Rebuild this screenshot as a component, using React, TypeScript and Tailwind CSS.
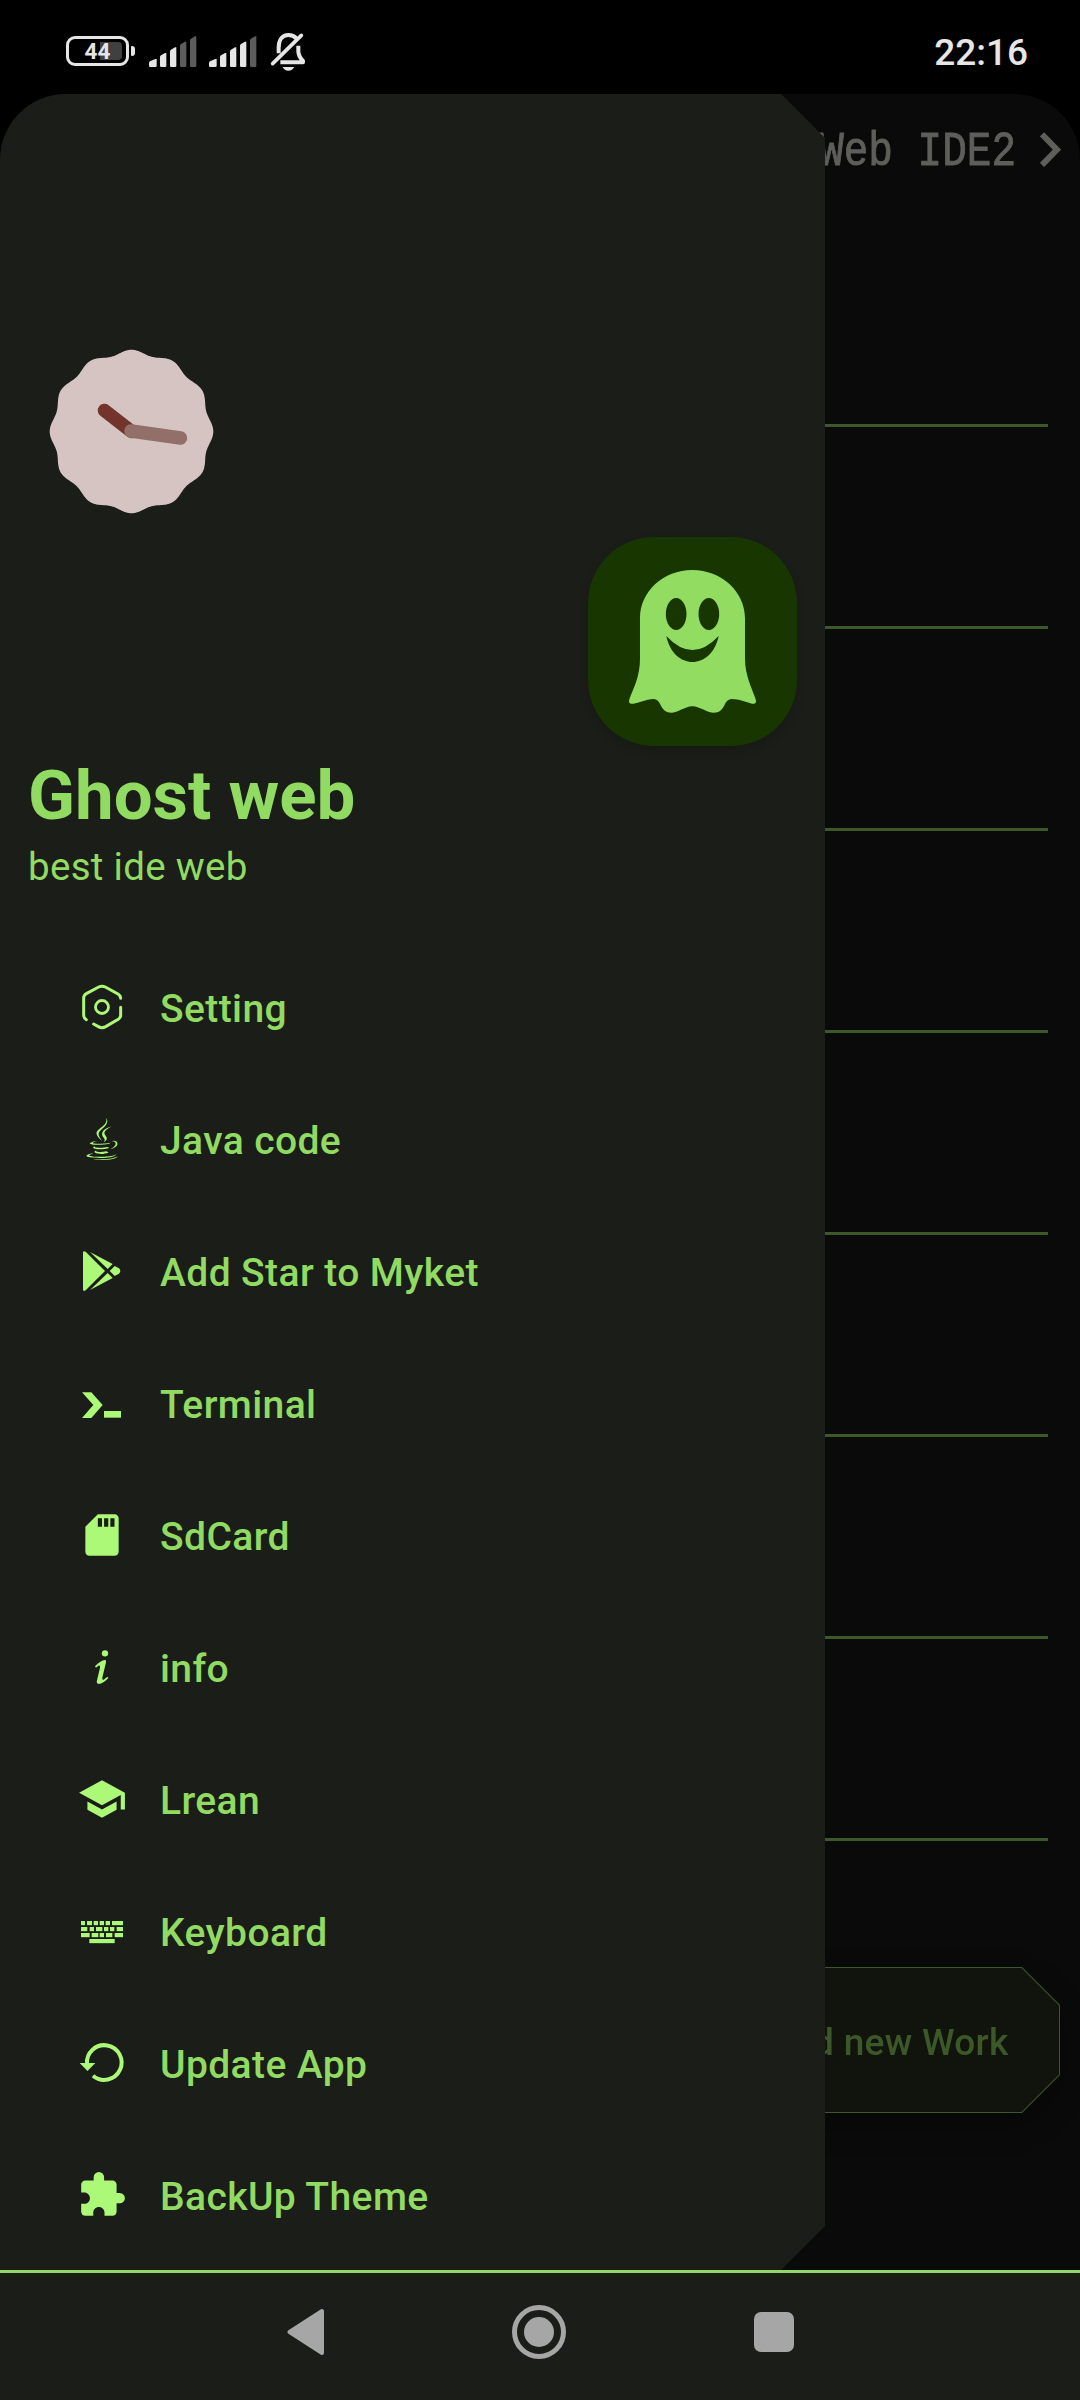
import type { ReactNode } from "react";
import { FaJava } from "react-icons/fa";
import { MdExtension, MdSchool, MdSdCard } from "react-icons/md";

/* Frame for the hand-drawn menu icons: 50px box on a 150-unit grid. */
function Glyph({ children }: { children: ReactNode }) {
  return (
    <svg viewBox="0 0 150 150" className="size-[50px]" fill="currentColor">
      {children}
    </svg>
  );
}

function SettingIcon() {
  return (
    <Glyph>
      <g transform="translate(-51 -66)" fill="none" stroke="currentColor" strokeWidth="9" strokeLinecap="round">
        <path d="M79 179Q71 174 71 165V115Q71 105 79 101L116 81Q126 76 136 81L174 102Q182 107 182 115" />
        <path d="M182 142V166Q182 173 176 177L137 200Q126 206 115 200L101 192" />
        <circle cx="126" cy="141" r="19.500" strokeWidth="8.500" />
      </g>
    </Glyph>
  );
}

function PlayIcon() {
  return (
    <Glyph>
      <g transform="translate(-51 -858)">
        <path d="M69 877Q70 871 77 875L135 933L77 991Q70 995 69 989Z" />
        <path d="M90 876L158 912L143 927Z" />
        <path d="M90 990L158 954L143 939Z" />
        <path d="M149 933L164 918L177 925Q185 933 177 941L164 948Z" />
      </g>
    </Glyph>
  );
}

function TerminalIcon() {
  return (
    <Glyph>
      <g transform="translate(-51 -54)">
        <path d="M66 97H94L128 135L94 174H66L100 135Z" />
        <path d="M132 153H183V173H132Z" />
      </g>
    </Glyph>
  );
}

function InfoIcon() {
  return (
    <Glyph>
      <g transform="translate(-51 -846)">
        <circle cx="135" cy="880" r="9.5" />
        <path d="M105 919C116 907 125 903 133 900Q140 899 138 907L127 953Q126 961 131 959L142 950L145 954C135 965 125 971 116 972Q108 971 111 961L120 923Q121 914 115 917L108 923Z" />
      </g>
    </Glyph>
  );
}

const KEYS = [
  [63, 513, 12], [81, 513, 15], [101, 513, 13], [119, 513, 13], [137, 513, 13], [156, 513, 33],
  [63, 531, 19], [89, 531, 13], [108, 531, 19], [132, 531, 13], [150, 531, 13], [170, 531, 19],
  [63, 549, 26], [95, 549, 20], [119, 549, 13], [138, 549, 19], [164, 549, 25],
  [88, 567, 76],
];

function KeyboardIcon() {
  return (
    <Glyph>
      <g transform="translate(-51 -468)">
        {KEYS.map(([x, y, w]) => (
          <rect key={`${x}-${y}`} x={x} y={y} width={w} height="12.5" />
        ))}
      </g>
    </Glyph>
  );
}

function UpdateIcon() {
  return (
    <Glyph>
      <g transform="translate(-51 -864)">
        <path d="M81 942A52 52 0 1 1 99 977" fill="none" stroke="currentColor" strokeWidth="12" />
        <path d="M59 939H106L82.500 963Z" />
      </g>
    </Glyph>
  );
}

const MENU: { label: string; icon: ReactNode }[] = [
  { label: "Setting", icon: <SettingIcon /> },
  { label: "Java code", icon: <FaJava className="size-[42px]" /> },
  { label: "Add Star to Myket", icon: <PlayIcon /> },
  { label: "Terminal", icon: <TerminalIcon /> },
  { label: "SdCard", icon: <MdSdCard className="size-[50px]" /> },
  { label: "info", icon: <InfoIcon /> },
  { label: "Lrean", icon: <MdSchool className="size-[50px]" /> },
  { label: "Keyboard", icon: <KeyboardIcon /> },
  { label: "Update App", icon: <UpdateIcon /> },
  { label: "BackUp Theme", icon: <MdExtension className="size-[50px]" /> },
];

function Signal({ active }: { active: number }) {
  const tops = [177, 159, 142, 125, 109];
  const lefts = [0, 33, 63, 93, 123];
  return (
    <svg viewBox="0 105 144 99" className="h-[33px] w-[48px]">
      {tops.map((t, i) => {
        const x = lefts[i];
        const w = i === 0 ? 23 : 19;
        return (
          <path
            key={t}
            d={`M${x} ${t + 12}Q${x} ${t + 9} ${x + 3} ${t + 7}L${x + w - 4} ${t}H${x + w}V197Q${x + w} 201 ${x + w - 4} 201H${x + 4}Q${x} 201 ${x} 197Z`}
            fill={i < active ? "#e6e6e6" : "#5c5c5c"}
          />
        );
      })}
    </svg>
  );
}

function StatusBar() {
  return (
    <header className="flex h-[94px] items-start justify-between bg-black pl-[66px] pr-[52px]">
      <div className="flex items-start pt-[32px]">
        <div className="mt-1 flex items-center gap-0.5">
          <div className="relative flex h-[30px] w-[63px] items-center justify-center rounded-[9px] border-3 border-[#e6e6e6]">
            <div className="absolute right-[4px] top-[3px] h-[18px] w-[22px] rounded-r-[4px] bg-[#404040]" />
            <span className="relative pt-px text-[22.5px] leading-none font-bold text-[#e6e6e6]">44</span>
          </div>
          <div className="h-[10px] w-1 rounded-r-[3px] rounded-l-[1px] bg-[#e6e6e6]" />
        </div>
        <div className="ml-[13.5px] mt-[3px] flex gap-3">
          <Signal active={3} />
          <Signal active={4} />
        </div>
        <svg viewBox="807 96 111 120" className="ml-[13px] h-[40px] w-[37px]" fill="none" stroke="#e6e6e6">
          <path d="M833 160V144C833 118 845 105 862 105C872 105 880 108 886 115" strokeWidth="12" />
          <path d="M892 137V154C892 168 897 174 906 183V187H838" strokeWidth="12" strokeLinejoin="round" />
          <path d="M815 191L901 106" strokeWidth="11" strokeLinecap="round" />
          <path d="M845 201H880Q874 212 862 212T845 201Z" fill="#e6e6e6" stroke="none" />
        </svg>
      </div>
      <span className="pt-[30.5px] text-[37px] leading-[44px] font-medium text-[#e6e6e6]">22:16</span>
    </header>
  );
}

/* Twelve-lobed clock face. */
const FACE = Array.from({ length: 360 }, (_, d) => {
  const a = (d * Math.PI) / 180;
  const r = 79.6 + 2.2 * Math.cos(12 * a);
  return `${(82.5 + r * Math.sin(a)).toFixed(2)},${(82.5 - r * Math.cos(a)).toFixed(2)}`;
}).join(" ");

function Clock() {
  return (
    <svg viewBox="0 0 165 165" className="size-[165px]">
      <polygon points={FACE} fill="#d6c4c2" />
      <g strokeWidth="13.5" strokeLinecap="round">
        <path d="M82.500 82.500L55.500 61.500" stroke="#73342b" />
        <path d="M82 82L131.500 89" stroke="#927069" />
      </g>
    </svg>
  );
}

function Ghost() {
  return (
    <div className="size-[209px] rounded-[66px] bg-[#183600] shadow-[0_4px_10px_rgba(0,0,0,0.15)]">
      <svg viewBox="54 51 627 627" className="size-full">
        <path
          fill="#92dd61"
          d="M210 295C210 214 280 150 367 150S525 214 525 295V415C525 468 546 505 557 538C560 549 556 553 546 551C528 547 507 537 485 537C460 540 468 568 442 577C414 584 396 560 367 559C339 560 320 584 293 577C267 566 275 539 250 537C228 538 206 549 190 551C179 553 175 549 178 538C189 507 210 473 210 415Z"
        />
        <g fill="#183600">
          <ellipse cx="318.500" cy="282" rx="31" ry="48" />
          <ellipse cx="416.500" cy="282" rx="31" ry="48" />
          <path d="M289 348Q367 432 446 348C425 452 310 452 289 348Z" />
        </g>
      </svg>
    </div>
  );
}

function Drawer() {
  return (
    <aside className="absolute inset-y-0 left-0 flex w-[825px] flex-col bg-[#1b1d18] text-[#91db62] [clip-path:polygon(0_0,calc(100%_-_44px)_0,100%_44px,100%_calc(100%_-_44px),calc(100%_-_44px)_100%,0_100%)]">
      <div className="flex h-[443px] flex-col pl-[49px] pt-[255px]">
        <Clock />
      </div>
      <div className="flex justify-end pr-7">
        <Ghost />
      </div>
      <div className="flex flex-col gap-[9px] pl-7 pt-[11px]">
        <h1 className="text-[69px] leading-[78px] font-bold">Ghost web</h1>
        <p className="text-[38.5px] leading-[46px] tracking-[0.3px]">best ide web</p>
      </div>
      <nav className="mt-[51px] flex flex-col">
        {MENU.map((m) => (
          <a key={m.label} className="flex h-[132px] items-center gap-[33px] pl-[77px]">
            <span className="flex size-[50px] shrink-0 items-center justify-center text-[#acf877]">{m.icon}</span>
            <span className="pt-[3px] text-[39px] leading-[46px] font-medium tracking-[0.4px]">{m.label}</span>
          </a>
        ))}
      </nav>
    </aside>
  );
}

function Page() {
  return (
    <div className="flex h-full flex-col bg-[#0a0a0a]">
      <div className="flex h-[110px] items-center justify-end gap-[24px] pr-[19px]">
        <span className="mt-[5px] scale-y-115 font-['Liberation_Mono',monospace] text-[41px] leading-[48px] text-[#5e5e5b] [-webkit-text-stroke:0.8px_#5e5e5b]">
          Web IDE2
        </span>
        <svg viewBox="900 394 63 105" className="h-[35px] w-[21px]" fill="none" stroke="#5e5e5b" strokeWidth="18">
          <path d="M906 401L951 447L906 493" />
        </svg>
      </div>
      <div className="flex flex-col gap-[199px] px-8 pt-[220px]">
        {Array.from({ length: 8 }, (_, i) => (
          <div key={i} className="h-[3px] bg-[#3d5828]" />
        ))}
      </div>
      <div className="flex justify-end pr-5 pt-[126px]">
        <div className="drop-shadow-[0_12px_14px_rgba(0,0,0,0.3)]">
          <button className="block h-[146px] bg-[#3d5828] p-px [clip-path:polygon(38px_0,calc(100%_-_38px)_0,100%_38px,100%_calc(100%_-_38px),calc(100%_-_38px)_100%,38px_100%,0_calc(100%_-_38px),0_38px)]">
            <span className="flex h-full items-center bg-[#10140c] px-[50.5px] pt-1.5 text-[37px] font-medium tracking-[0.3px] text-[#3d5828] [clip-path:polygon(37.5px_0,calc(100%_-_37.5px)_0,100%_37.5px,100%_calc(100%_-_37.5px),calc(100%_-_37.5px)_100%,37.5px_100%,0_calc(100%_-_37.5px),0_37.5px)]">
              Add new Work
            </span>
          </button>
        </div>
      </div>
    </div>
  );
}

function NavBar() {
  return (
    <footer className="flex h-[130px] items-start border-t-3 border-[#92d868] bg-[#1b1d18] pl-[287px] pt-8 text-[#a6a6a6]">
      <svg viewBox="0 0 38 54" className="h-[54px] w-[38px]" fill="currentColor" stroke="currentColor" strokeWidth="4" strokeLinejoin="round">
        <path d="M2.500 27L35 6V48Z" />
      </svg>
      <svg viewBox="0 0 54 54" className="ml-[187px] size-[54px]" fill="currentColor">
        <circle cx="27" cy="27" r="24.500" fill="none" stroke="currentColor" strokeWidth="5" />
        <circle cx="27" cy="27" r="15" />
      </svg>
      <div className="ml-[188px] mt-[7px] size-[40px] rounded-[7px] bg-[#a6a6a6]" />
    </footer>
  );
}

export default function App() {
  return (
    <div className="flex h-[2400px] w-[1080px] flex-col overflow-hidden bg-black font-['Roboto',sans-serif]">
      <StatusBar />
      <main className="relative h-[2176px] overflow-hidden rounded-t-[66px]">
        <Page />
        <Drawer />
      </main>
      <NavBar />
    </div>
  );
}
